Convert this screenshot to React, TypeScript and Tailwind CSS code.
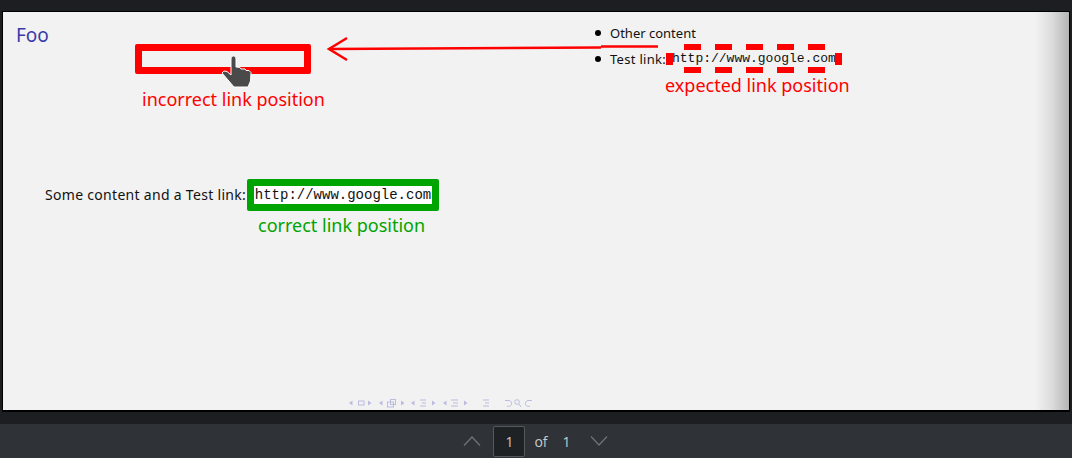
import React from 'react';

const dashes = [0, 1, 2, 3, 4];

function ChevronIcon({ down }: { down?: boolean }) {
  return (
    <svg width="18" height="12" viewBox="0 0 18 12" fill="none" stroke="#6f7276" strokeWidth="1.3">
      <path d={down ? 'M1 1.5 L9 10 L17 1.5' : 'M1 10.5 L9 2 L17 10.5'} />
    </svg>
  );
}

function HandCursor() {
  return (
    <svg className="absolute left-[216px] top-[41px]" width="38" height="38" viewBox="0 0 38 38">
      <path
        d="M12 6 C12 2 17 2 17 6 L17 14 L21 14.500 L22 16 L26 16 L27 17.500 L30 17.500 L32 19.500 L31.500 28 L29 34 L15 34 L9 27 L3 20 L5 18 L8 18.500 L12 22 Z"
        fill="#4a4a4a"
        stroke="#ffffff"
        strokeWidth="1"
        strokeLinejoin="round"
      />
    </svg>
  );
}

function BeamerNav() {
  const c = '#bcbce0';
  return (
    <svg className="absolute left-[345px] top-[385px]" width="190" height="12" viewBox="0 0 190 12" fill={c} stroke="none">
      <path d="M1 6 L4.500 3.500 V8.500 Z M20 3.500 L23.500 6 L20 8.500 Z" />
      <rect x="10.500" y="4" width="5.500" height="4" fill="none" stroke={c} />
      <path d="M31 6 L34.500 3.500 V8.500 Z M53 3.500 L56.500 6 L53 8.500 Z" />
      <rect x="39.500" y="5" width="6" height="5" fill="none" stroke={c} />
      <rect x="42.500" y="2.500" width="5" height="5" fill="none" stroke={c} />
      <path d="M63 6 L66.500 3.500 V8.500 Z M84 3.500 L87.500 6 L84 8.500 Z" />
      <path d="M72 3 H78 M74 6 H78 M72 9 H78" stroke={c} strokeWidth="1.200" />
      <path d="M95 6 L98.500 3.500 V8.500 Z M116 3.500 L119.500 6 L116 8.500 Z" />
      <path d="M103 3 H110 M105 6 H110 M103 9 H110" stroke={c} strokeWidth="1.200" />
      <path d="M135 3 H141 M137 6 H141 M135 9 H141" stroke={c} strokeWidth="1.200" />
      <g fill="none" stroke={c}>
        <path d="M157 3.500 H161 A3 3 0 1 1 159 9" />
        <circle cx="169" cy="5" r="2.300" />
        <path d="M171 7 L173 10" />
        <path d="M184 3.500 H180 A3 3 0 1 0 182 9" />
      </g>
    </svg>
  );
}

export default function App() {
  return (
    <div className="w-[1072px] h-[458px] flex flex-col bg-[#1c1e22] overflow-hidden antialiased font-['Open_Sans',sans-serif]">
      <div className="h-[11px] shrink-0" />

      {/* page */}
      <div className="h-[401px] shrink-0 mx-[2px] border border-b-2 border-black relative bg-[#f2f2f2] overflow-hidden font-['Noto_Sans',sans-serif]">
        <div className="absolute right-0 top-0 bottom-0 w-[34px] bg-gradient-to-r from-transparent via-[#dcdcdc] to-[#b4b4b4]" />

        <span className="absolute left-[13px] top-[9px] text-[19px] leading-[28px] text-[#3b3baa]">Foo</span>

        {/* incorrect box */}
        <div className="absolute left-[132px] top-[32px] w-[176px] flex flex-col">
          <div className="h-[30px] border-[7px] border-[#ff0000] rounded-[2px]" />
          <span className="ml-[7px] mt-[11px] text-[18px] leading-[28px] text-[#ff0000] whitespace-nowrap">incorrect link position</span>
        </div>
        <HandCursor />

        {/* arrow */}
        <svg className="absolute left-[320px] top-[20px]" width="340" height="32" viewBox="0 0 340 32" fill="none" stroke="#ff0000" strokeWidth="2.500">
          <path d="M24 6 L6 17 L24 28" />
          <path d="M6 17 L278 15.500" />
          <path d="M278 14.500 L335 14.500" />
        </svg>

        {/* list */}
        <ul className="absolute left-[592px] top-[11px] flex flex-col gap-[6px] text-[13px] leading-[20px] text-[#111] whitespace-nowrap">
          <li className="flex items-center gap-[9px]">
            <span className="w-[6px] h-[6px] rounded-full bg-black" />
            <span>Other content</span>
          </li>
          <li className="flex items-center gap-[9px]">
            <span className="w-[6px] h-[6px] rounded-full bg-black" />
            <span className="w-[59px] tracking-[0.3px]">Test link:</span>
            <span className="-ml-[6px] text-[13px] font-['Liberation_Mono',monospace]">http://www.google.com</span>
          </li>
        </ul>

        {/* expected dashes */}
        <div className="absolute left-[663px] top-[32px] w-[176px] flex flex-col">
          <div className="flex gap-[14px] pl-[18px]">
            {dashes.map(i => <div key={i} className="w-[17px] h-[6px] bg-[#ff0000]" />)}
          </div>
          <div className="flex justify-between mt-[3px]">
            <div className="w-[7px] h-[12px] bg-[#ff0000]" />
            <div className="w-[7px] h-[12px] bg-[#ff0000]" />
          </div>
          <div className="flex gap-[14px] pl-[18px] mt-[2px]">
            {dashes.map(i => <div key={i} className="w-[17px] h-[6px] bg-[#ff0000]" />)}
          </div>
          <span className="-mt-[2px] -ml-[1px] text-[18px] leading-[28px] text-[#ff0000] whitespace-nowrap">expected link position</span>
        </div>

        {/* correct link */}
        <div className="absolute left-[42px] top-[167px] flex flex-col">
          <div className="flex items-center">
            <span className="w-[202px] text-[14px] leading-[20px] tracking-[0.3px] text-[#111] whitespace-nowrap">Some content and a Test link:</span>
            <div className="w-[192px] h-[32px] border-[7px] border-[#00a400] rounded-[2px] bg-white flex items-center justify-center">
              <span className="text-[14px] leading-[18px] text-[#111] whitespace-nowrap font-['Liberation_Mono',monospace]">http://www.google.com</span>
            </div>
          </div>
          <span className="ml-[213px] text-[18px] leading-[28px] text-[#00a400] whitespace-nowrap">correct link position</span>
        </div>

        <BeamerNav />
      </div>

      <div className="h-[12px] shrink-0" />

      {/* toolbar */}
      <div className="flex-1 bg-[#2f3237] flex items-center justify-center text-[14px] text-[#c9cbcd]">
        <div className="flex items-center ml-[-1px]">
          <ChevronIcon />
          <div className="ml-[12px] w-[32px] h-[31px] flex items-center justify-center bg-[#1f2225] border border-[#55585c] rounded-[2px]">1</div>
          <span className="ml-[9px]">of</span>
          <span className="ml-[15px]">1</span>
          <div className="ml-[19px]"><ChevronIcon down /></div>
        </div>
      </div>
    </div>
  );
}
